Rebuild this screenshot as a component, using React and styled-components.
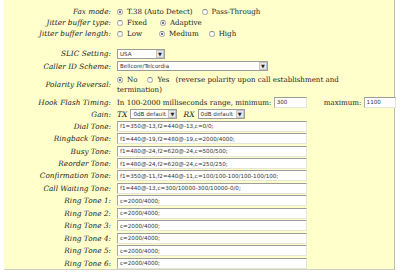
import { Fragment } from 'react'
import styled, { createGlobalStyle } from 'styled-components'

const Global = createGlobalStyle`
  html, body {
    margin: 0;
    padding: 0;
    background: #ffffff;
  }
`

const Panel = styled.div`
  margin-left: 4px;
  width: 391px;
  height: 270px;
  box-sizing: border-box;
  padding-top: 6px;
  background-color: #ffffcc;
  border-right: 1px solid #bdbdb0;
  border-bottom: 1px solid #cfcfc4;
  color: #222;
  font-family: "DejaVu Serif", serif;
  display: grid;
  grid-template-columns: 107px 1fr;
  column-gap: 6px;
  align-content: start;
`

const Label = styled.div`
  height: ${p => p.$h}px;
  display: flex;
  align-items: center;
  justify-content: flex-end;
  font-style: italic;
  font-size: 7.3px;
  white-space: nowrap;
`

const Value = styled.div`
  min-height: ${p => p.$h}px;
  display: flex;
  align-items: center;
  font-size: 7.1px;
  white-space: nowrap;
`

const Spacer = styled.div`
  grid-column: 1 / 3;
  height: 8.5px;
`

const Choice = styled.span`
  display: inline-flex;
  align-items: center;
  gap: 4px;
  margin-right: ${p => p.$mr || 0}px;
`

const Radio = styled.span`
  display: inline-block;
  box-sizing: border-box;
  width: 6px;
  height: 6px;
  border-radius: 50%;
  border: 1px solid #b0b0b0;
  border-top-color: #808080;
  background: #fff;
  position: relative;
  flex: none;
  margin-right: ${p => p.$mr || 0}px;
  &::after {
    content: '';
    display: ${p => (p.$on ? 'block' : 'none')};
    position: absolute;
    left: 1px;
    top: 1px;
    width: 2px;
    height: 2px;
    border-radius: 50%;
    background: #444;
  }
`

const Field = styled.input`
  box-sizing: border-box;
  width: ${p => p.$w || 190}px;
  height: 11px;
  margin: 0;
  padding: 0 2px;
  background: #fff;
  border: 1px solid #e6e6d6;
  border-top: 1px solid #9c9c9c;
  border-left: 1px solid #a8a8a8;
  font-family: "DejaVu Sans", sans-serif;
  font-size: 5.6px;
  color: #333;
  outline: none;
`

const Select = styled.div`
  box-sizing: border-box;
  width: ${p => p.$w}px;
  height: 10px;
  display: flex;
  align-items: center;
  justify-content: space-between;
  background: #fff;
  border: 1px solid #9c9c9c;
  padding-left: 2px;
  font-family: "DejaVu Sans", sans-serif;
  font-size: 5.6px;
  color: #333;
`

const Arrow = styled.span`
  box-sizing: border-box;
  width: 8px;
  height: 8px;
  display: flex;
  align-items: center;
  justify-content: center;
  background: #e8e8e8;
  border: 1px solid #c4c4c4;
  font-size: 5px;
  color: #222;
`

const Wrap = styled.div`
  grid-column: 2;
  font-size: 7.1px;
  line-height: 10px;
  padding: 2px 0;
  white-space: nowrap;
`

const Line = styled.div`
  display: flex;
  align-items: center;
  height: 10px;
`

const Gap = styled.span`
  display: inline-block;
  flex: none;
  width: ${p => p.$w}px;
`

const Tag = styled.span`
  font-style: italic;
  font-size: 7.6px;
  margin-right: 3px;
  margin-left: ${p => p.$ml || 0}px;
`

const Sel = ({ w, children }) => (
  <Select $w={w}>
    {children}
    <Arrow>▼</Arrow>
  </Select>
)

const tones = [
  ['Dial Tone:', 'f1=350@-13,f2=440@-13,c=0/0;'],
  ['Ringback Tone:', 'f1=440@-19,f2=480@-19,c=2000/4000;'],
  ['Busy Tone:', 'f1=480@-24,f2=620@-24,c=500/500;'],
  ['Reorder Tone:', 'f1=480@-24,f2=620@-24,c=250/250;'],
  ['Confirmation Tone:', 'f1=350@-11,f2=440@-11,c=100/100-100/100-100/100;'],
  ['Call Waiting Tone:', 'f1=440@-13,c=300/10000-300/10000-0/0;'],
  ['Ring Tone 1:', 'c=2000/4000;'],
  ['Ring Tone 2:', 'c=2000/4000;'],
  ['Ring Tone 3:', 'c=2000/4000;'],
  ['Ring Tone 4:', 'c=2000/4000;'],
  ['Ring Tone 5:', 'c=2000/4000;'],
  ['Ring Tone 6:', 'c=2000/4000;'],
]

export default function App() {
  return (
    <>
      <Global />
      <Panel>
        <Label $h={11}>Fax mode:</Label>
        <Value $h={11}>
          <Choice $mr={9}><Radio $on />T.38 (Auto Detect)</Choice>
          <Choice><Radio />Pass-Through</Choice>
        </Value>

        <Label $h={11}>Jitter buffer type:</Label>
        <Value $h={11}>
          <Choice $mr={13}><Radio />Fixed</Choice>
          <Choice><Radio $on />Adaptive</Choice>
        </Value>

        <Label $h={11}>Jitter buffer length:</Label>
        <Value $h={11}>
          <Choice $mr={17}><Radio />Low</Choice>
          <Choice $mr={10}><Radio $on />Medium</Choice>
          <Choice><Radio />High</Choice>
        </Value>

        <Spacer />

        <Label $h={12.5}>SLIC Setting:</Label>
        <Value $h={12.5}><Sel w={48}>USA</Sel></Value>

        <Label $h={12.5}>Caller ID Scheme:</Label>
        <Value $h={12.5}><Sel w={151}>Bellcore/Telcordia</Sel></Value>

        <Label $h={24}>Polarity Reversal:</Label>
        <Wrap>
          <Line>
            <Choice $mr={10}><Radio $on />No</Choice>
            <Choice $mr={6}><Radio />Yes</Choice>
            <span>(reverse polarity upon call establishment and</span>
          </Line>
          <Line>termination)</Line>
        </Wrap>

        <Label $h={11.5}>Hook Flash Timing:</Label>
        <Value $h={11.5}>
          In 100-2000 milliseconds range, minimum:&nbsp;
          <Field $w={33} value="300" readOnly />
          <Gap $w={17} />
          maximum:&nbsp;
          <Field $w={32} value="1100" readOnly />
        </Value>

        <Label $h={12}>Gain:</Label>
        <Value $h={12}>
          <Tag>TX</Tag>
          <Sel w={47}>0dB default</Sel>
          <Tag $ml={6}>RX</Tag>
          <Sel w={47}>0dB default</Sel>
        </Value>

        {tones.map(([label, val]) => (
          <Fragment key={label}>
            <Label $h={12.45}>{label}</Label>
            <Value $h={12.45}>
              <Field value={val} readOnly />
            </Value>
          </Fragment>
        ))}
      </Panel>
    </>
  )
}
